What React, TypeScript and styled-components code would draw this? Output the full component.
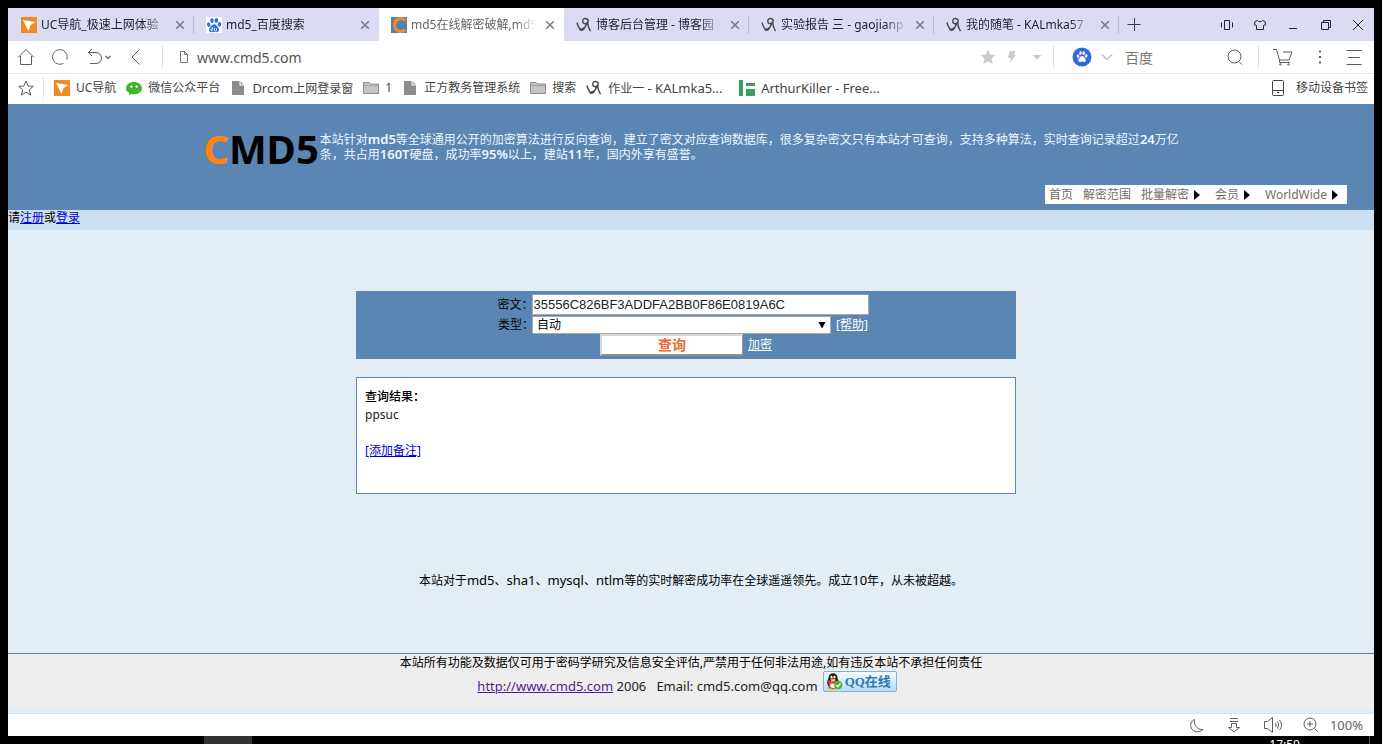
import React from "react";
import styled, { createGlobalStyle, css } from "styled-components";

const sans = `"Noto Sans", "Noto Sans CJK SC", sans-serif`;

const GlobalStyle = createGlobalStyle`
  * { box-sizing: border-box; }
  body { margin: 0; background: #000; font-family: ${sans}; font-size: 12px; color: #000; }
  button, input, select { font-family: inherit; font-size: inherit; color: inherit; }
  button { background: none; border: 0; padding: 0; cursor: pointer; }
  p, h1 { margin: 0; }
`;

/* ---------- shell ---------- */

const Screen = styled.div`
  display: flex;
  flex-direction: column;
  min-height: 100vh;
  padding: 8px 8px 0;
  background: #000;
`;

const BrowserWindow = styled.div`
  flex: 1;
  display: flex;
  flex-direction: column;
  background: #fff;
`;

const Spacer = styled.div<{ $w?: number }>`
  flex: ${(p) => (p.$w ? `0 0 ${p.$w}px` : "1")};
`;

const Svg = styled.svg`
  flex: none;
  fill: none;
  stroke: currentColor;
`;

const IconButton = styled.button<{ $w?: number; $tone?: string }>`
  display: flex;
  align-items: center;
  justify-content: center;
  flex: none;
  width: ${(p) => p.$w ?? 34}px;
  height: 24px;
  color: ${(p) => p.$tone ?? "#5c5c5c"};
`;

const Divider = styled.span<{ $h?: number; $tone?: string }>`
  flex: none;
  width: 1px;
  height: ${(p) => p.$h ?? 22}px;
  background: ${(p) => p.$tone ?? "#e2e2e2"};
`;

/* ---------- tab strip ---------- */

const TabStrip = styled.div`
  display: flex;
  align-items: center;
  height: 33px;
  padding-left: 1px;
  background: #dbdcf1;
`;

const Tab = styled.div<{ $active?: boolean; $line?: boolean }>`
  display: flex;
  align-items: center;
  gap: 4px;
  flex: 0 1 185px;
  min-width: 0;
  height: 33px;
  padding-left: 12px;
  padding-right: 7px;
  color: ${(p) => (p.$active ? "#666" : "#1d1f33")};
  background: ${(p) =>
    p.$active
      ? "#fff"
      : p.$line
        ? "linear-gradient(#b9bace, #b9bace) right center / 1px 18px no-repeat"
        : "none"};
`;

const TabTitle = styled.span`
  flex: 1;
  min-width: 0;
  overflow: hidden;
  white-space: nowrap;
  line-height: 18px;
  mask-image: linear-gradient(to right, #000 104px, transparent 126px);
`;

/* ---------- toolbar ---------- */

const Toolbar = styled.div`
  display: flex;
  align-items: center;
  height: 33px;
  padding-left: 1px;
  padding-right: 2px;
  border-bottom: 1px solid #e6e6e6;
`;

const AddressField = styled.label`
  flex: 1;
  display: flex;
  align-items: center;
  gap: 7px;
  min-width: 0;
  padding-left: 15px;
  color: #777;
`;

const BareInput = styled.input<{ $tone?: string }>`
  flex: 1;
  min-width: 0;
  height: 24px;
  padding: 0;
  border: 0;
  outline: 0;
  background: none;
  font-size: 14px;
  color: ${(p) => p.$tone ?? "#555"};
`;

const SearchField = styled.div`
  display: flex;
  align-items: center;
  width: 204px;
  padding-left: 16px;
`;

/* ---------- bookmarks ---------- */

const BookmarkBar = styled.div`
  display: flex;
  align-items: center;
  height: 30px;
  padding: 0 6px 2px 1px;
  color: #444;
`;

const BookmarkList = styled.nav`
  display: flex;
  align-items: center;
  gap: 10px;
  padding-left: 10px;
`;

const Bookmark = styled.a<{ $wide?: boolean }>`
  display: flex;
  align-items: center;
  gap: 6px;
  color: #444;
  text-decoration: none;
  white-space: nowrap;
  line-height: 18px;

  & > span {
    ${(p) => p.$wide && css`width: 121px;`}
  }
`;

const Latin = styled.span<{ $bold?: boolean }>`
  font-size: 13px;
  font-weight: ${(p) => (p.$bold ? 600 : 400)};
`;

/* ---------- page ---------- */

const Page = styled.div`
  flex: 1;
  display: flex;
  flex-direction: column;
  background: #e2edf6;
`;

const SiteHeader = styled.header`
  height: 106px;
  padding-top: 22px;
  background: #5b86b3;
`;

const Masthead = styled.div`
  display: flex;
  justify-content: center;
  gap: 1px;
  height: 59px;
  padding-left: 7px;
`;

const Logo = styled.h1`
  font-size: 40px;
  font-weight: 700;
  line-height: 46px;

  & > span {
    color: #ff8310;
  }
`;

const Intro = styled.p`
  width: 866px;
  padding-top: 6px;
  line-height: 15px;
  color: #edf6ff;
`;

const Menu = styled.nav`
  display: flex;
  align-items: center;
  width: fit-content;
  height: 19px;
  margin-left: auto;
  margin-right: 27px;
  padding: 0 5px 0 4px;
  background: #fff;
`;

const menuText = css`
  display: flex;
  align-items: center;
  gap: 5px;
  color: #776d64;
  font-size: 12px;
  line-height: 18px;
  text-decoration: none;
`;

const MenuLink = styled.a`
  ${menuText}
  margin-right: 10px;
`;

const MenuButton = styled.button`
  ${menuText}
  & + & {
    margin-left: 11px;
  }
`;

const LoginBar = styled.div`
  height: 20px;
  line-height: 16px;
  background: #cce0ef;

  a {
    color: #0000d0;
  }
`;

const Content = styled.main`
  flex: 1;
  display: flex;
  flex-direction: column;
  align-items: center;
  padding-top: 61px;
`;

const Column = styled.div`
  display: flex;
  flex-direction: column;
  gap: 18px;
  width: 660px;
  max-width: 100%;
  margin-right: 10px;
`;

const QueryForm = styled.form`
  display: flex;
  flex-direction: column;
  height: 68px;
  padding-top: 3px;
  background: #5b86b3;
`;

const FormRow = styled.div<{ $h: number; $shift?: boolean }>`
  display: flex;
  align-items: center;
  justify-content: center;
  height: ${(p) => p.$h}px;
  padding-right: ${(p) => (p.$shift ? 6 : 0)}px;
`;

const FieldLabel = styled.label`
  width: 34px;
  line-height: 18px;
  white-space: nowrap;
`;

const HashInput = styled.input`
  width: 337px;
  height: 21px;
  padding: 0 1px;
  border: 1px solid #a9a9a9;
  border-top-color: #8b9bab;
  background: #fff;
  font-family: "Liberation Sans", Arial, sans-serif;
  font-size: 13px;
  color: #222;
`;

const SelectBox = styled.span`
  position: relative;
  display: flex;

  svg {
    position: absolute;
    right: 5px;
    top: 5px;
    pointer-events: none;
  }
`;

const TypeSelect = styled.select`
  appearance: none;
  width: 299px;
  height: 18px;
  padding: 0 4px;
  border: 1px solid #a9a9a9;
  border-radius: 0;
  background: #fff;
  line-height: 16px;
`;

const FormLink = styled.a`
  margin-left: 5px;
  line-height: 18px;
  color: #fff;
`;

const QueryButton = styled.button`
  width: 143px;
  height: 22px;
  border: 2px solid #fff;
  border-color: #d8d8d8 #909090 #909090 #d8d8d8;
  border-right-width: 1px;
  background: #fff;
  font-size: 14px;
  font-weight: 700;
  line-height: 18px;
  color: #ec6a2c;
`;

const ResultBox = styled.section`
  height: 117px;
  padding: 10px 8px;
  border: 1px solid #5b86b3;
  background: #fff;
  line-height: 18px;

  p {
    color: #222;
  }

  a {
    display: inline-block;
    margin-top: 18px;
    color: #0000d0;
  }
`;

const ResultTitle = styled.h2`
  margin: 0;
  font-size: 12px;
  font-weight: 500;
`;

const Slogan = styled.p`
  margin-top: 77px;
  line-height: 18px;
`;

const SiteFooter = styled.footer`
  display: flex;
  flex-direction: column;
  align-items: center;
  height: 54px;
  margin-bottom: 6px;
  border-top: 1px solid #5f7f9f;
  background: #eee;
  line-height: 17px;
`;

const Contact = styled.div`
  display: flex;
  align-items: flex-end;
  height: 24px;
  padding-right: 8px;
  font-size: 13px;
  line-height: 18px;
  white-space: pre;
  color: #222;

  & > a {
    color: #551a8b;
  }
`;

const QQButton = styled.button`
  display: flex;
  align-items: center;
  gap: 2px;
  align-self: flex-start;
  width: 74px;
  height: 21px;
  margin-left: 5px;
  padding-left: 2px;
  border: 1px solid #7fb2dc;
  border-radius: 2px;
  background: linear-gradient(#f2faff, #b9dcf5);
  font-family: "Liberation Serif", "Noto Sans CJK SC", serif;
  font-size: 13px;
  font-weight: 700;
  line-height: 18px;
  color: #3079b5;
`;

const StatusBar = styled.div`
  display: flex;
  align-items: center;
  justify-content: flex-end;
  height: 23px;
  padding-right: 11px;
  border-top: 1px solid #d5e3ee;
  background: #fff;
  color: #666;
  font-size: 13px;
  line-height: 18px;
`;

const Taskbar = styled.div`
  display: flex;
  height: 8px;
  overflow: hidden;
  padding-left: 196px;
  padding-right: 4px;
  color: #fff;
`;

const RunningApp = styled.span`
  width: 48px;
  background: #333;
`;

const Clock = styled.time`
  padding-top: 1px;
  margin-right: 69px;
  line-height: 16px;
`;

/* ---------- icons ---------- */

type IconProps = { size?: number; children: React.ReactNode; sw?: number; box?: number };
const Icon = ({ size = 18, box = 18, sw = 1, children }: IconProps) => (
  <Svg width={size} height={size} viewBox={`0 0 ${box} ${box}`} strokeWidth={sw} aria-hidden="true">
    {children}
  </Svg>
);

const CloseIcon = () => (
  <Icon size={10} box={10} sw={1.5}>
    <path d="M1.200 1.200l7.600 7.600M8.800 1.200L1.200 8.800" stroke="#777888" />
  </Icon>
);

const UCIcon = () => (
  <Icon size={16} box={16}>
    <rect width="16" height="16" fill="#f08b22" stroke="none" />
    <path d="M2 3l12.500 2-5 3-2 6z" fill="#fff" stroke="none" />
  </Icon>
);

const Paw = ({ fill }: { fill: string }) => (
  <g fill={fill} stroke="none">
    <ellipse cx="2.700" cy="7.600" rx="1.700" ry="2.300" transform="rotate(-15 2.700 7.600)" />
    <ellipse cx="6" cy="3.400" rx="1.700" ry="2.500" />
    <ellipse cx="10.300" cy="3.400" rx="1.700" ry="2.500" transform="rotate(8 10.300 3.400)" />
    <ellipse cx="13.500" cy="7.300" rx="1.700" ry="2.300" transform="rotate(12 13.500 7.300)" />
    <path d="M8.100 7.200c2 0 2.600 1.700 3.900 3 1.600 1.500 1.500 5-1.500 5-1 0-1.500-.4-2.400-.4s-1.500.4-2.500.4c-3 0-3.100-3.500-1.500-5 1.400-1.300 2-3 4-3z" />
  </g>
);

const BaiduTabIcon = () => (
  <Icon size={16} box={16}>
    <rect width="16" height="16" fill="#fff" stroke="none" />
    <Paw fill="#2b6fe8" />
    <path d="M6.700 10v2.500q0 1.200-1 1.200t-1-1 1-1h1M8.500 11v2q0 .8.800.8h1.200V11" stroke="#fff" strokeWidth=".8" />
  </Icon>
);

const CmdTabIcon = () => (
  <Icon size={16} box={16}>
    <rect width="16" height="16" fill="#4f83ad" stroke="none" />
    <path d="M14.500 3.200C9.500-.3 3.500 2.500 3.500 8s6 8.300 11 4.800" stroke="#f08b35" strokeWidth="3.200" />
  </Icon>
);

const BlogIcon = () => (
  <Icon size={16} box={16} sw={1.4}>
    <path d="M1 5.500c.8 3 1.800 6 3.800 6.800 2.600.5 5.500-2.800 6.800-7.800M12.600 4.200C11.500.600 6.800.600 6.800 4s3.600 3.600 5.200.500c-.400 3 .5 6.500 2.500 9.700" stroke="#4a4a52" />
    <path d="M3.600 12.300c1.500 1 3.500.3 4.800-1.300" stroke="#4a4a52" strokeWidth="2" />
  </Icon>
);

const WeChatIcon = () => (
  <Icon size={16} box={16}>
    <path d="M8 2c4.500 0 8 2.700 8 6.200s-3.500 6.100-8 6.100c-.9 0-1.700-.1-2.500-.3L2.800 15.300l.5-2.300C1.300 11.900 0 10.200 0 8.200 0 4.700 3.500 2 8 2z" fill="#3fb62c" stroke="none" />
    <circle cx="5.300" cy="6.600" r="1.200" fill="#fff" stroke="none" />
    <circle cx="10.700" cy="6.600" r="1.200" fill="#fff" stroke="none" />
  </Icon>
);

const FileIcon = () => (
  <Icon size={16} box={16}>
    <path d="M2 1h7.500v4.500H14V15H2z" fill="#8b8b8b" stroke="none" />
    <path d="M10.500 1L14 4.500h-3.500z" fill="#aaa" stroke="none" />
  </Icon>
);

const FolderIcon = () => (
  <Icon size={16} box={16}>
    <path d="M.5 13.500v-11h5.500l1.500 1.500h8v9.500z" fill="#c4c4c4" stroke="#8f8f8f" />
    <path d="M1 5.500h14" stroke="#a5a5a5" />
  </Icon>
);

const GreenIcon = () => (
  <Icon size={16} box={16}>
    <path d="M0 0h4v16H0zM7 3h9v3H7zM7 9h9v7H7z" fill="#3f9c62" stroke="none" />
  </Icon>
);

const Caret = () => (
  <Icon size={10} box={10}>
    <path d="M0 0l6 5-6 5z" fill="#000" stroke="none" />
  </Icon>
);

const PenguinIcon = () => (
  <Icon size={17} box={17}>
    <ellipse cx="7" cy="15" rx="5.500" ry="1.600" fill="#f3a51c" stroke="none" />
    <ellipse cx="7" cy="9.500" rx="5.800" ry="6" fill="#1b1b1b" stroke="none" />
    <ellipse cx="7" cy="5" rx="4.500" ry="4.800" fill="#1b1b1b" stroke="none" />
    <ellipse cx="7" cy="11" rx="3.700" ry="4" fill="#fff" stroke="none" />
    <ellipse cx="5.500" cy="4" rx="1.100" ry="1.500" fill="#fff" stroke="none" />
    <ellipse cx="8.500" cy="4" rx="1.100" ry="1.500" fill="#fff" stroke="none" />
    <ellipse cx="7" cy="6.500" rx="2.600" ry=".9" fill="#f3a51c" stroke="none" />
    <path d="M2 8.200c3 1.600 7 1.600 10 0" stroke="#e1371e" strokeWidth="2.400" />
    <path d="M3.500 9v3.500" stroke="#e1371e" strokeWidth="2" />
    <circle cx="12.300" cy="12" r="4.200" fill="#4db030" stroke="none" />
    <path d="M10.200 12l1.600 1.700 2.700-3.300" stroke="#fff" strokeWidth="1.300" />
  </Icon>
);

/* ---------- data ---------- */

const tabs = [
  { icon: <UCIcon />, title: "UC导航_极速上网体验", line: true },
  { icon: <BaiduTabIcon />, title: "md5_百度搜索" },
  { icon: <CmdTabIcon />, title: "md5在线解密破解,md5", active: true },
  { icon: <BlogIcon />, title: "博客后台管理 - 博客园", line: true },
  { icon: <BlogIcon />, title: "实验报告 三 - gaojianp", line: true },
  { icon: <BlogIcon />, title: "我的随笔 - KALmka57", line: true },
];

const bookmarks = [
  { icon: <UCIcon />, text: <>UC导航</> },
  { icon: <WeChatIcon />, text: <>微信公众平台</> },
  { icon: <FileIcon />, text: <><Latin>Drcom</Latin>上网登录窗</> },
  { icon: <FolderIcon />, text: <>1</> },
  { icon: <FileIcon />, text: <>正方教务管理系统</> },
  { icon: <FolderIcon />, text: <>搜索</> },
  { icon: <BlogIcon />, text: <>作业一<Latin> - KALmka5...</Latin></>, wide: true },
  { icon: <GreenIcon />, text: <Latin>ArthurKiller - Free...</Latin>, wide: true },
];

/* ---------- app ---------- */

export default function App() {
  return (
    <Screen>
      <GlobalStyle />
      <BrowserWindow>
        <TabStrip>
          {tabs.map((t) => (
            <Tab key={t.title} $active={t.active} $line={t.line}>
              {t.icon}
              <TabTitle>{t.title}</TabTitle>
              <IconButton $w={14} aria-label="关闭标签页"><CloseIcon /></IconButton>
            </Tab>
          ))}
          <IconButton $w={30} $tone="#33344a" aria-label="新标签页">
            <Icon><path d="M2.500 8.500h13M9.500 2v13" /></Icon>
          </IconButton>
          <Spacer />
          <IconButton $w={33} $tone="#222338" aria-label="侧栏">
            <Icon><path d="M6.500 4.500h5v9h-5zM3.500 6.500v5M14.500 6.500v5" /></Icon>
          </IconButton>
          <IconButton $w={33} $tone="#222338" aria-label="皮肤">
            <Icon><path d="M6.500 4.500L4 5.500 3.500 9l2 .5v4h7v-4l2-.5L14 5.500l-2.500-1c-.8 1.600-4.200 1.600-5 0z" /></Icon>
          </IconButton>
          <IconButton $w={33} $tone="#222338" aria-label="最小化">
            <Icon><path d="M5 12.500h8" /></Icon>
          </IconButton>
          <IconButton $w={33} $tone="#222338" aria-label="还原">
            <Icon><path d="M4.500 6.500h7v7h-7zM6.500 6.500v-2h7v7h-2" /></Icon>
          </IconButton>
          <IconButton $w={32} $tone="#222338" aria-label="关闭">
            <Icon><path d="M4 4l10 10M14 4L4 14" /></Icon>
          </IconButton>
        </TabStrip>

        <Toolbar>
          <IconButton aria-label="主页">
            <Icon><path d="M1 9.500L9 1.500l8 8M3.500 8v8.500h11V8" /></Icon>
          </IconButton>
          <IconButton aria-label="刷新">
            <Icon><path d="M12.500 15.300a7.300 7.300 0 1 1 3.200-3.700" /></Icon>
          </IconButton>
          <IconButton $w={44} aria-label="撤销">
            <Icon><path d="M6 1L2.500 4.500 6 8M2.500 4.500H10a5.500 5.500 0 0 1 0 11H4" /></Icon>
            <Icon size={8} box={8} sw={1.2}><path d="M1.500 3L4 5.500 6.500 3" /></Icon>
          </IconButton>
          <IconButton $w={30} aria-label="后退">
            <Icon><path d="M12.500 1.500L5 9l7.500 7.500" /></Icon>
          </IconButton>
          <Spacer $w={11} />
          <Divider />
          <AddressField>
            <Icon size={12} box={12}><path d="M2.500.5h4l3 3v8h-7zM6.500.5v3h3" /></Icon>
            <BareInput defaultValue="www.cmd5.com" aria-label="地址" />
          </AddressField>
          <IconButton $w={24} $tone="#c9c9cf" aria-label="收藏">
            <Icon><path d="M9 1.500l2.200 5 5.300.5-4 3.600 1.200 5.400L9 13.200 4.300 16l1.200-5.400-4-3.600 5.300-.5z" fill="currentColor" stroke="none" /></Icon>
          </IconButton>
          <IconButton $w={24} $tone="#c9c9cf" aria-label="加速">
            <Icon><path d="M6.500 3h6L10.500 7H13l-6.500 8.500L8 10H5z" fill="currentColor" stroke="none" /></Icon>
          </IconButton>
          <IconButton $w={25} $tone="#c9c9cf" aria-label="更多">
            <Icon><path d="M4.500 7h9L9 11.500z" fill="currentColor" stroke="none" /></Icon>
          </IconButton>
          <Spacer $w={4} />
          <Divider />
          <SearchField>
            <IconButton $w={24} aria-label="搜索引擎">
              <Icon size={20} box={20}>
                <circle cx="10" cy="10" r="9.500" fill="#3068e0" stroke="none" />
                <g transform="translate(4 3.500) scale(.75)"><Paw fill="#fff" /></g>
              </Icon>
            </IconButton>
            <IconButton $w={26} $tone="#888" aria-label="切换搜索引擎">
              <Icon size={12} box={12}><path d="M1 3.500l5 5 5-5" /></Icon>
            </IconButton>
            <Spacer $w={5} />
            <BareInput defaultValue="百度" aria-label="搜索" $tone="#777" />
            <IconButton $w={46} aria-label="搜索">
              <Icon><circle cx="8.500" cy="8.500" r="6.500" /><path d="M13 13.500l3 3" /></Icon>
            </IconButton>
          </SearchField>
          <Divider />
          <IconButton $w={47} aria-label="购物">
            <Icon size={20} box={20}><path d="M0 2.500h3.500l3 10.500h9.500l3-8H10M6.500 13v2.500h10" /><circle cx="7.500" cy="17.500" r=".8" /><circle cx="15.500" cy="17.500" r=".8" /></Icon>
          </IconButton>
          <IconButton $w={30} aria-label="扩展">
            <Icon><path d="M7 2.500h2v2H7zM7 8h2v2H7zM7 13.500h2v2H7z" fill="currentColor" stroke="none" /></Icon>
          </IconButton>
          <IconButton $w={36} aria-label="菜单">
            <Icon><path d="M1.500 2.500h15M3 9.500h12M1.500 16.500h15" /></Icon>
          </IconButton>
        </Toolbar>

        <BookmarkBar>
          <IconButton aria-label="书签">
            <Icon><path d="M9 2l2 5 5.300.3-4 3.400 1.300 5.300L9 13.200 4.400 16l1.300-5.300-4-3.400L7 7z" /></Icon>
          </IconButton>
          <Divider />
          <BookmarkList aria-label="书签栏">
            {bookmarks.map((b, i) => (
              <Bookmark key={i} href="#" $wide={b.wide}>
                {b.icon}
                <span>{b.text}</span>
              </Bookmark>
            ))}
          </BookmarkList>
          <Spacer />
          <Bookmark href="#">
            <Icon><path d="M1.500 1.500h9a1 1 0 0 1 1 1v13a1 1 0 0 1-1 1h-9a1 1 0 0 1-1-1v-13a1 1 0 0 1 1-1zM.5 11.500h11" /><path d="M5 13.500h2" strokeWidth="1.500" /></Icon>
            <span>移动设备书签</span>
          </Bookmark>
        </BookmarkBar>

        <Page>
          <SiteHeader>
            <Masthead>
              <Logo><span>C</span>MD5</Logo>
              <Intro>
                本站针对<Latin $bold>md5</Latin>等全球通用公开的加密算法进行反向查询，建立了密文对应查询数据库，很多复杂密文只有本站才可查询，支持多种算法，实时查询记录超过<Latin $bold>24</Latin>万亿条，共占用<Latin $bold>160T</Latin>硬盘，成功率<Latin $bold>95%</Latin>以上，建站<Latin $bold>11</Latin>年，国内外享有盛誉。
              </Intro>
            </Masthead>
            <Menu>
              <MenuLink href="#">首页</MenuLink>
              <MenuLink href="#">解密范围</MenuLink>
              <MenuButton>批量解密<Caret /></MenuButton>
              <MenuButton>会员<Caret /></MenuButton>
              <MenuButton>WorldWide<Caret /></MenuButton>
            </Menu>
          </SiteHeader>
          <LoginBar>请<a href="#">注册</a>或<a href="#">登录</a></LoginBar>

          <Content>
            <Column>
              <QueryForm onSubmit={(e) => e.preventDefault()}>
                <FormRow $h={21} $shift>
                  <FieldLabel htmlFor="hash">密文：</FieldLabel>
                  <HashInput id="hash" defaultValue="35556C826BF3ADDFA2BB0F86E0819A6C" />
                </FormRow>
                <FormRow $h={19} $shift>
                  <FieldLabel htmlFor="type">类型：</FieldLabel>
                  <SelectBox>
                    <TypeSelect id="type"><option>自动</option></TypeSelect>
                    <Icon size={8} box={8}><path d="M.5 1h7L4 7.500z" fill="#000" stroke="none" /></Icon>
                  </SelectBox>
                  <FormLink href="#">[帮助]</FormLink>
                </FormRow>
                <FormRow $h={22}>
                  <QueryButton type="submit">查询</QueryButton>
                  <FormLink href="#">加密</FormLink>
                </FormRow>
              </QueryForm>
              <ResultBox>
                <ResultTitle>查询结果：</ResultTitle>
                <p>ppsuc</p>
                <a href="#">[添加备注]</a>
              </ResultBox>
            </Column>
            <Slogan>
              本站对于<Latin>md5</Latin>、<Latin>sha1</Latin>、<Latin>mysql</Latin>、<Latin>ntlm</Latin>等的实时解密成功率在全球遥遥领先。成立<Latin>10</Latin>年，从未被超越。
            </Slogan>
          </Content>

          <SiteFooter>
            <p>本站所有功能及数据仅可用于密码学研究及信息安全评估,严禁用于任何非法用途,如有违反本站不承担任何责任</p>
            <Contact>
              <a href="#">http://www.cmd5.com</a>
              <span>{" 2006   Email: cmd5.com@qq.com"}</span>
              <QQButton type="button"><PenguinIcon />QQ在线</QQButton>
            </Contact>
          </SiteFooter>
        </Page>

        <StatusBar>
          <IconButton $w={38} aria-label="夜间模式">
            <Icon size={16} box={16}><path d="M5.500 2.500C2 4 .8 7.500 2.300 11c1.700 4 7.500 5.300 11.700 1.500-5 .5-9.500-3.500-8.500-10z" /></Icon>
          </IconButton>
          <IconButton $w={38} aria-label="下载">
            <Icon size={16} box={16}><path d="M3 1.500h8M3 4.500h8M4.500 6.500h5v4h3L7 15l-5.500-4.500h3z" /></Icon>
          </IconButton>
          <IconButton $w={38} aria-label="声音">
            <Icon size={20} box={20}><path d="M1.500 6.500h3l5-4v15l-5-4h-3zM12.500 8q1.200 2 0 4M14.500 6.500q2.500 3.500 0 7M16.500 5q4 5 0 10" /></Icon>
          </IconButton>
          <IconButton $w={38} aria-label="缩放">
            <Icon size={16} box={16}><circle cx="7" cy="7" r="6" /><path d="M4 7h6M7 4v6M11.500 11.500l3.500 3.500" /></Icon>
          </IconButton>
          <span>100%</span>
        </StatusBar>
      </BrowserWindow>
      <Taskbar>
        <RunningApp />
        <Spacer />
        <Clock>17:50</Clock>
        <Divider $h={8} $tone="#555" />
      </Taskbar>
    </Screen>
  );
}
